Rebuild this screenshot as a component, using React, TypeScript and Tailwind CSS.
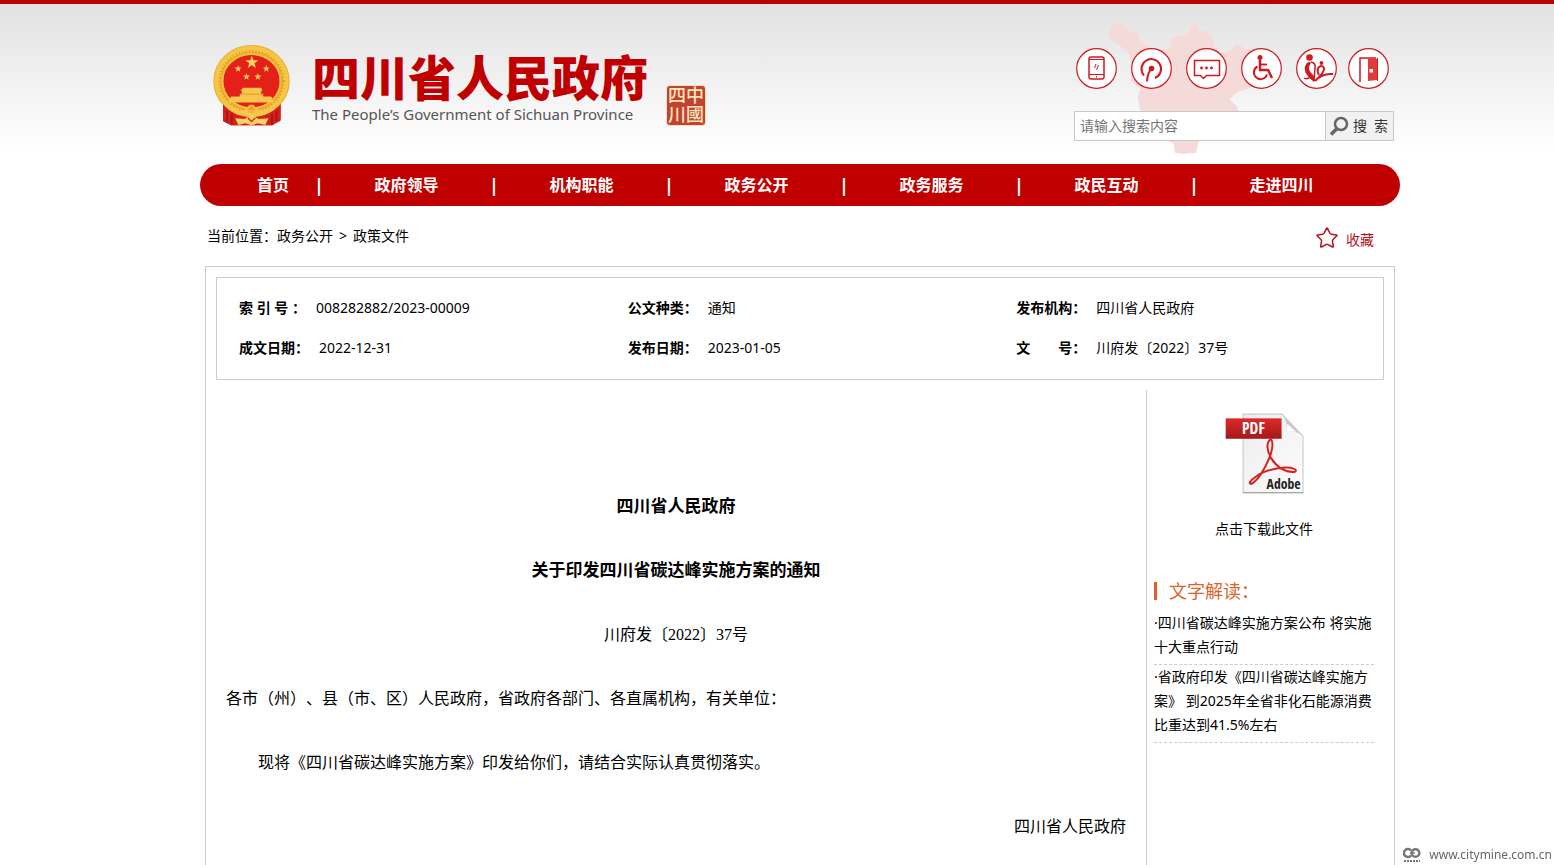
import { Star } from "lucide-react";

const navItems = ["政府领导", "机构职能", "政务公开", "政务服务", "政民互动", "走进四川"];

const infoRows = [
  [
    { label: "索 引 号 ：", value: "008282882/2023-00009" },
    { label: "公文种类：", value: "通知" },
    { label: "发布机构：", value: "四川省人民政府" },
  ],
  [
    { label: "成文日期：", value: "2022-12-31" },
    { label: "发布日期：", value: "2023-01-05" },
    { label: "文　　号：", value: "川府发〔2022〕37号" },
  ],
];

const related = [
  "·四川省碳达峰实施方案公布 将实施十大重点行动",
  "·省政府印发《四川省碳达峰实施方案》 到2025年全省非化石能源消费比重达到41.5%左右",
];

const star = (cx: number, cy: number, r: number) => {
  const points = [];
  for (let i = 0; i < 10; i++) {
    const radius = i % 2 ? r * 0.4 : r;
    const angle = (Math.PI / 5) * i - Math.PI / 2;
    points.push(`${cx + radius * Math.cos(angle)},${cy + radius * Math.sin(angle)}`);
  }
  return points.join(" ");
};

function Emblem() {
  return (
    <svg viewBox="38 44 230 242" className="w-[77px] h-[81px] shrink-0" aria-hidden="true">
      <path d="M68 200 L68 272 L92 284 L214 284 L240 270 L240 200 Z" fill="#d3201c" />
      <path d="M80 222v54M94 240v42M228 222v52M214 240v42" stroke="#a81512" strokeWidth="5" />
      <ellipse cx="153" cy="154" rx="100" ry="95" fill="#e32119" />
      <ellipse cx="153" cy="152" rx="99" ry="93" fill="none" stroke="#eba92e" strokeWidth="30" />
      <ellipse cx="153" cy="152" rx="103" ry="97" fill="none" stroke="#f5c646" strokeWidth="17" />
      <ellipse cx="153" cy="152" rx="96" ry="90" fill="none" stroke="#dc9526" strokeWidth="6" strokeDasharray="3 7" />
      <ellipse cx="153" cy="152" rx="87" ry="81" fill="none" stroke="#f6bf3f" strokeWidth="5" />
      <path d="M68 222 Q100 262 150 264 Q208 262 240 222 L240 266 L216 284 L92 284 L68 270 Z" fill="#d3201c" />
      <path d="M80 240v36M94 250v32M228 240v32M214 250v32" stroke="#a81512" strokeWidth="5" />
      <g fill="#fbd05a">
        <polygon points={star(154, 96, 21)} />
        <polygon points={star(113, 115, 11)} />
        <polygon points={star(197, 115, 11)} />
        <polygon points={star(138, 139, 11)} />
        <polygon points={star(172, 139, 11)} />
      </g>
      <path d="M128 172h54l4 9h-4v9h6v8h24l8 18H84l8-18h26v-8h6v-9h-4z" fill="#f8c64c" />
      <path d="M120 191h68" stroke="#d8801e" strokeWidth="2" />
      <path d="M74 219 Q100 245 130 240 Q152 210 176 240 Q206 245 234 219 Q210 260 153 254 Q98 260 74 219Z" fill="#f8c64c" />
      <circle cx="153" cy="235" r="13" fill="#f4b63a" />
      <path d="M147 238l6-8 6 8" stroke="#d3601c" strokeWidth="2" fill="none" />
      <path d="M104 263 L132 265 L153 252 L174 265 L204 263 L194 283 L172 278 L153 284 L134 278 L114 283Z" fill="#fbd363" />
      <path d="M142 262l11 11 11-11" stroke="#d3201c" strokeWidth="4" fill="none" />
    </svg>
  );
}

function Seal() {
  return (
    <svg viewBox="0 0 40 41" className="w-10 h-[41px] shrink-0 overflow-visible" role="img" aria-label="中国四川">
      <rect width="40" height="41" rx="3" fill="#f8dfb8" />
      <rect x="1" y="1" width="38" height="39" rx="3" fill="#c04330" />
      <g
        fill="#fbe3bb"
        fontSize="18"
        fontWeight="500"
        textAnchor="middle"
        fontFamily="'Noto Sans CJK TC', sans-serif"
      >
        <text x="11" y="17">四</text>
        <text x="29" y="17">中</text>
        <text x="11" y="36">川</text>
        <text x="29" y="36">國</text>
      </g>
    </svg>
  );
}

function ProvinceMap() {
  return (
    <svg viewBox="140 30 520 410" className="absolute top-4 right-[120px] w-[173px] h-[137px]" aria-hidden="true">
      <path
        d="M148 66L158 42L180 36L204 60L234 68L238 86L262 108L290 118L320 116L334 106L328 92L346 80L378 76L394 46L410 38L416 58L440 64L458 84L464 112L496 130L530 104L560 116L588 112L590 128L640 130L650 150L646 190L606 196L598 220L560 238L534 244L508 268L532 290L536 320L500 330L484 350L440 356L418 380L408 428L372 432L344 428L340 400L316 390L300 350L290 320L262 316L240 300L232 262L240 236L212 212L216 170L206 130L176 104L150 86Z"
        fill="#f5dada"
      />
    </svg>
  );
}

function PhoneIcon() {
  return (
    <>
      <rect x="13" y="9" width="15" height="22" rx="2" strokeWidth="1.5" />
      <path d="M13 11.5h15M13 26.5h15" strokeWidth="1" />
      <path d="M20 16l-1.500 4M22.500 17l-2 5" strokeWidth="1" />
      <circle cx="20.500" cy="28.800" r=".7" fill="currentColor" stroke="none" />
    </>
  );
}

function PodcastIcon() {
  return (
    <>
      <path d="M13 27.500A9.800 9.800 0 1 1 24 30" strokeWidth="2" />
      <circle cx="20.500" cy="20.500" r="2.800" fill="currentColor" stroke="none" />
      <path d="M20.500 20.500q-4 4-4.500 13" strokeWidth="2" />
    </>
  );
}

function ChatIcon() {
  return (
    <>
      <path d="M8.500 12.500h25v15h-13l-3 3-3-3h-6z" strokeWidth="1.500" />
      <g fill="currentColor" stroke="none">
        <circle cx="15.500" cy="20" r="1.400" />
        <circle cx="20.500" cy="20" r="1.400" />
        <circle cx="25.500" cy="20" r="1.400" />
      </g>
    </>
  );
}

function WheelchairIcon() {
  return (
    <>
      <circle cx="19" cy="9.500" r="2.500" fill="currentColor" stroke="none" />
      <path d="M19 12v10h8l4 8" strokeWidth="2.500" />
      <path d="M19 16.500h7" strokeWidth="1.800" />
      <path d="M16.500 18.500a6.700 6.700 0 1 0 9.500 8" strokeWidth="2" />
    </>
  );
}

function CareIcon() {
  return (
    <>
      <circle cx="13.500" cy="9.500" r="3.300" fill="currentColor" stroke="none" />
      <circle cx="25.500" cy="15" r="1.900" fill="currentColor" stroke="none" />
      <path d="M11 15Q4 23 18 34Q20 31 17 27Q10 21 15 15Q13 13 11 15Z" fill="currentColor" stroke="none" />
      <path d="M15 14q5 1 4 6l-1 13" strokeWidth="1.500" />
      <path d="M8 30q3 2 8-2" strokeWidth="1.500" />
      <path d="M22 20q4-4 6 0q1 4-9 13q7-8 18-7M22 20q-1 4 1 7" strokeWidth="2" />
    </>
  );
}

function DoorIcon() {
  return (
    <>
      <path d="M12 34V10h16" strokeWidth="1.500" />
      <path d="M20 10l9 1v21l-9 1z" fill="#e03a3a" stroke="none" />
      <path d="M29.500 10v23" strokeWidth="1" />
      <rect x="21.500" y="21" width="3.500" height="3.500" fill="#fff" stroke="none" />
    </>
  );
}

const quickLinks = [
  { name: "移动端", icon: PhoneIcon },
  { name: "智能问答", icon: PodcastIcon },
  { name: "互动交流", icon: ChatIcon },
  { name: "无障碍浏览", icon: WheelchairIcon },
  { name: "长者模式", icon: CareIcon },
];

function RoundLink({ name, icon: Icon }: { name: string; icon: () => React.ReactNode }) {
  return (
    <a href="#" aria-label={name} className="text-[#cf1a1f]">
      <svg viewBox="0 0 41 41" className="size-[41px]" fill="none" stroke="currentColor">
        <circle cx="20.500" cy="20.500" r="19.800" fill="#fff" strokeWidth="1.200" />
        <Icon />
      </svg>
    </a>
  );
}

function Header() {
  return (
    <header className="relative flex items-start justify-between pl-[13px] pr-[6px] pt-[41px] h-40">
      <ProvinceMap />
      <a href="#" className="flex items-start">
        <Emblem />
        <div className="ml-[22px] mt-[7px]">
          <h1 className="text-5xl leading-[52px] font-black text-[#c00000] whitespace-nowrap">四川省人民政府</h1>
          <p className="text-[15px] leading-5 text-[#555] whitespace-nowrap">The People’s Government of Sichuan Province</p>
        </div>
        <div className="ml-[18px] mt-10">
          <Seal />
        </div>
      </a>
      <div className="relative w-80">
        <div className="flex gap-[11px] pl-[2px] pt-[3px]">
          <div className="flex gap-[14px]">
            {quickLinks.map((link) => (
              <RoundLink key={link.name} {...link} />
            ))}
          </div>
          <RoundLink name="退出" icon={DoorIcon} />
        </div>
        <form className="mt-[22px] flex h-[30px] border border-[#c8c8c8] bg-white" onSubmit={(e) => e.preventDefault()}>
          <input
            type="text"
            aria-label="搜索内容"
            placeholder="请输入搜索内容"
            className="min-w-0 flex-1 px-[5px] text-sm placeholder:text-[#757575] outline-none"
          />
          <button
            type="submit"
            className="flex w-[68px] items-center gap-1 border-l border-[#c8c8c8] bg-[#f1f1f1] pl-[3px] text-sm text-[#333] whitespace-nowrap"
          >
            <svg viewBox="0 0 20 20" className="size-5 shrink-0" fill="none" stroke="#666" aria-hidden="true">
              <circle cx="12" cy="8" r="6" strokeWidth="2.500" />
              <path d="M8 12.500L2 18.500" strokeWidth="3.500" />
            </svg>
            <span className="flex gap-[7px]">
              <span>搜</span>
              <span>索</span>
            </span>
          </button>
        </form>
      </div>
    </header>
  );
}

function Nav() {
  return (
    <nav className="h-[42px] rounded-full bg-[#c00000] pl-[57px] text-base font-bold text-white">
      <ul className="flex h-full items-center">
        <li className="flex w-[67px] items-center justify-between">
          <a href="#">首页</a>
          <span className="text-lg">|</span>
        </li>
        {navItems.map((item, i) => (
          <li key={item} className="flex w-[175px] items-center">
            <a href="#" className="flex-1 text-center">
              {item}
            </a>
            <span className={i === navItems.length - 1 ? "invisible text-lg" : "text-lg"}>|</span>
          </li>
        ))}
      </ul>
    </nav>
  );
}

function PdfIcon() {
  return (
    <svg viewBox="260 68 236 242" className="w-[79px] h-[81px]" aria-hidden="true">
      <defs>
        <linearGradient id="paper" x1="0" y1="0" x2="1" y2="1">
          <stop offset="0" stopColor="#ececec" />
          <stop offset="1" stopColor="#fdfdfd" />
        </linearGradient>
        <linearGradient id="label" x1="0" y1="0" x2="0" y2="1">
          <stop offset="0" stopColor="#dc2a27" />
          <stop offset="1" stopColor="#a3191b" />
        </linearGradient>
      </defs>
      <path d="M314 71h116l63 66v169H314z" fill="url(#paper)" stroke="#c4c4c4" strokeWidth="3" />
      <path d="M314 306h180" stroke="#a8a8a8" strokeWidth="4" />
      <path d="M430 71q18 22 14 52q30-4 49 14z" fill="#c9c9c9" />
      <path d="M446 100l-2 24q14-3 28 0z" fill="#fff" />
      <rect x="262" y="84" width="167" height="61" fill="url(#label)" />
      <text x="345" y="131" fill="#fff" fontSize="47" fontWeight="700" textAnchor="middle" fontFamily="'Open Sans Condensed', 'Open Sans', sans-serif">
        PDF
      </text>
      <path
        d="M397 146C382 156 385 180 397 202C414 229 440 246 468 244C480 238 462 230 438 231C405 234 376 240 354 257C330 273 330 283 342 278C362 265 380 232 395 196C402 174 405 154 397 146Z"
        fill="none"
        stroke="#d8221f"
        strokeWidth="6"
      />
      <text x="435" y="294" fill="#222" fontSize="41" fontWeight="700" textAnchor="middle" fontFamily="'Open Sans Condensed', 'Open Sans', sans-serif">
        Adobe
      </text>
    </svg>
  );
}

function InfoTable() {
  return (
    <table className="w-full table-fixed text-sm">
      <tbody>
        {infoRows.map((row, i) => (
          <tr key={i} className="h-10">
            {row.map((cell) => (
              <td key={cell.label} className="pl-[22px]">
                <b className="mr-[10px]">{cell.label}</b>
                {cell.value}
              </td>
            ))}
          </tr>
        ))}
      </tbody>
    </table>
  );
}

function Sidebar() {
  return (
    <aside className="w-[248px] shrink-0 border-l border-[#ccc] pl-[7px] pr-5 text-sm">
      <a href="#" className="flex flex-col items-center pt-[23px]">
        <PdfIcon />
        <span className="mt-[23px] leading-6">点击下载此文件</span>
      </a>
      <h2 className="mt-[41px] flex items-center text-lg leading-[18px] text-[#d9652b]">
        <span className="mr-3 h-[18px] w-[3px] bg-[#d9652b]" />
        文字解读：
      </h2>
      <ul className="mt-[11px]">
        {related.map((title) => (
          <li key={title} className="border-b border-dashed border-[#ccc] pb-[5px] leading-6">
            <a href="#">{title}</a>
          </li>
        ))}
      </ul>
    </aside>
  );
}

function Article() {
  return (
    <article className="flex-1 space-y-8 px-5 pt-[101px] pb-4 text-base leading-8 [text-spacing-trim:space-all] font-['Liberation_Serif','Noto_Sans_CJK_SC',serif]">
      <h2 className="text-center text-[17px] leading-8 font-bold">四川省人民政府</h2>
      <h2 className="text-center text-[17px] leading-8 font-bold">关于印发四川省碳达峰实施方案的通知</h2>
      <p className="text-center">川府发〔2022〕37号</p>
      <p>各市（州）、县（市、区）人民政府，省政府各部门、各直属机构，有关单位：</p>
      <p className="indent-8">现将《四川省碳达峰实施方案》印发给你们，请结合实际认真贯彻落实。</p>
      <p className="text-right">四川省人民政府</p>
    </article>
  );
}

function Watermark() {
  return (
    <div className="fixed right-[2px] bottom-0 flex items-center gap-2 text-xs leading-5 text-[#666]">
      <svg viewBox="0 0 18 16" className="w-[18px] h-4" fill="none" stroke="#777" aria-hidden="true">
        <path d="M8 3.500A4 4 0 1 0 8 8.500" strokeWidth="2.500" />
        <circle cx="12.500" cy="6" r="3.800" strokeWidth="2.500" />
        <path d="M7 6h5" strokeWidth="1.500" />
        <path d="M1 14h16" strokeWidth="2" strokeDasharray="2 1" />
      </svg>
      www.citymine.com.cn
    </div>
  );
}

export default function App() {
  return (
    <div
      lang="zh-CN"
      className="flex min-h-screen flex-col border-t-4 border-[#b80000] bg-[linear-gradient(to_bottom,#e2e2e2,#ffffff_150px)] pl-[200px] pr-[154px] text-black font-['Noto_Sans','Noto_Sans_CJK_SC',sans-serif]"
    >
      <Header />
      <Nav />
      <div className="flex h-[60px] justify-between pl-[7px] pr-[26px]">
        <p className="text-sm leading-[60px]">
          当前位置：<a href="#">政务公开</a>
          <span className="mx-[6px]">&gt;</span>
          <a href="#">政策文件</a>
        </p>
        <button type="button" className="flex items-center gap-[7px] pt-1 text-sm text-[#b3141d]">
          <Star className="size-6" strokeWidth={1.5} />
          <span className="pt-1">收藏</span>
        </button>
      </div>
      <main className="mx-[5px] flex flex-1 flex-col border border-b-0 border-[#ccc]">
        <section className="mx-[10px] mt-[10px] border border-[#ccc] pt-[10px] pb-[11px]">
          <InfoTable />
        </section>
        <div className="mt-[10px] flex flex-1">
          <Article />
          <Sidebar />
        </div>
      </main>
      <Watermark />
    </div>
  );
}
